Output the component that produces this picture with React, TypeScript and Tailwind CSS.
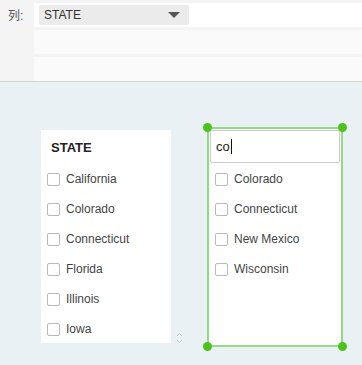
import React from "react";

const font = { fontFamily: '"Liberation Sans", Arial, "Noto Sans CJK SC", sans-serif' };

function Box() {
  return <span className="block w-[13px] h-[13px] border border-[#b9b9b9] rounded-[2px] bg-white shrink-0" />;
}

function Item({ label, pl }: { label: string; pl: string }) {
  return (
    <div className={"h-[30px] flex items-center pt-[2px] gap-[6px] " + pl}>
      <Box />
      <span className="text-[12px] text-[#444]">{label}</span>
    </div>
  );
}

function Dot({ cls }: { cls: string }) {
  return <span className={"absolute w-[9px] h-[9px] rounded-full bg-[#4dc21c] " + cls} />;
}

export default function App() {
  return (
    <div className="w-[362px] h-[365px] bg-[#e9f1f5] overflow-hidden" style={font}>
      <div className="h-[82px] bg-[#f4f4f4] border-b border-[#d5d5d5] flex">
        <div className="w-[34px] shrink-0 pl-[8px] pt-[7px] text-[12px] text-[#555]">列:</div>
        <div className="flex-1 flex flex-col pt-[3px] gap-[3px]">
          <div className="h-[24px] bg-white flex items-center pl-[5px]">
            <div className="w-[150px] h-[20px] bg-[#ebebeb] rounded-[2px] flex items-center justify-between pl-[5px] pr-[9px]">
              <span className="text-[12px] text-[#333]">STATE</span>
              <svg width="12" height="6" viewBox="0 0 12 6"><path d="M0 0H12L6 6Z" fill="#555" /></svg>
            </div>
          </div>
          <div className="h-[24px] bg-[#fafafa]" />
          <div className="h-[24px] bg-[#fafafa]" />
        </div>
      </div>
      <div className="flex pl-[41px]">
        <div className="mt-[48px] w-[130px] h-[213px] bg-white">
          <div className="h-[33px] flex items-center pt-[2px] pl-[10px] text-[13px] font-bold text-[#222]">STATE</div>
          {["California", "Colorado", "Connecticut", "Florida", "Illinois", "Iowa"].map((s) => (
            <Item key={s} label={s} pl="pl-[6px]" />
          ))}
        </div>
        <div className="w-[36px] flex flex-col items-start pl-[5px] pt-[250px]">
          <svg width="7" height="12" viewBox="0 0 7 12">
            <path d="M1 4L3.5 1.5L6 4" stroke="#c9c9c9" fill="none" strokeWidth="1" />
            <path d="M1 8L3.5 10.5L6 8" stroke="#c9c9c9" fill="none" strokeWidth="1" />
          </svg>
        </div>
        <div className="relative mt-[45px] w-[136px] h-[220px] border-2 border-[#93da85] bg-white p-px">
          <div className="h-[33px] border border-[#cccccc] rounded-[2px] flex items-center pl-[5px]">
            <span className="text-[13px] text-[#222]">co</span>
            <span className="w-px h-[15px] bg-[#111] ml-[1px]" />
          </div>
          {["Colorado", "Connecticut", "New Mexico", "Wisconsin"].map((s) => (
            <Item key={s} label={s} pl="pl-[5px]" />
          ))}
          <Dot cls="-left-[6px] -top-[6px]" />
          <Dot cls="-right-[6px] -top-[6px]" />
          <Dot cls="-left-[6px] -bottom-[6px]" />
          <Dot cls="-right-[6px] -bottom-[6px]" />
        </div>
      </div>
    </div>
  );
}
